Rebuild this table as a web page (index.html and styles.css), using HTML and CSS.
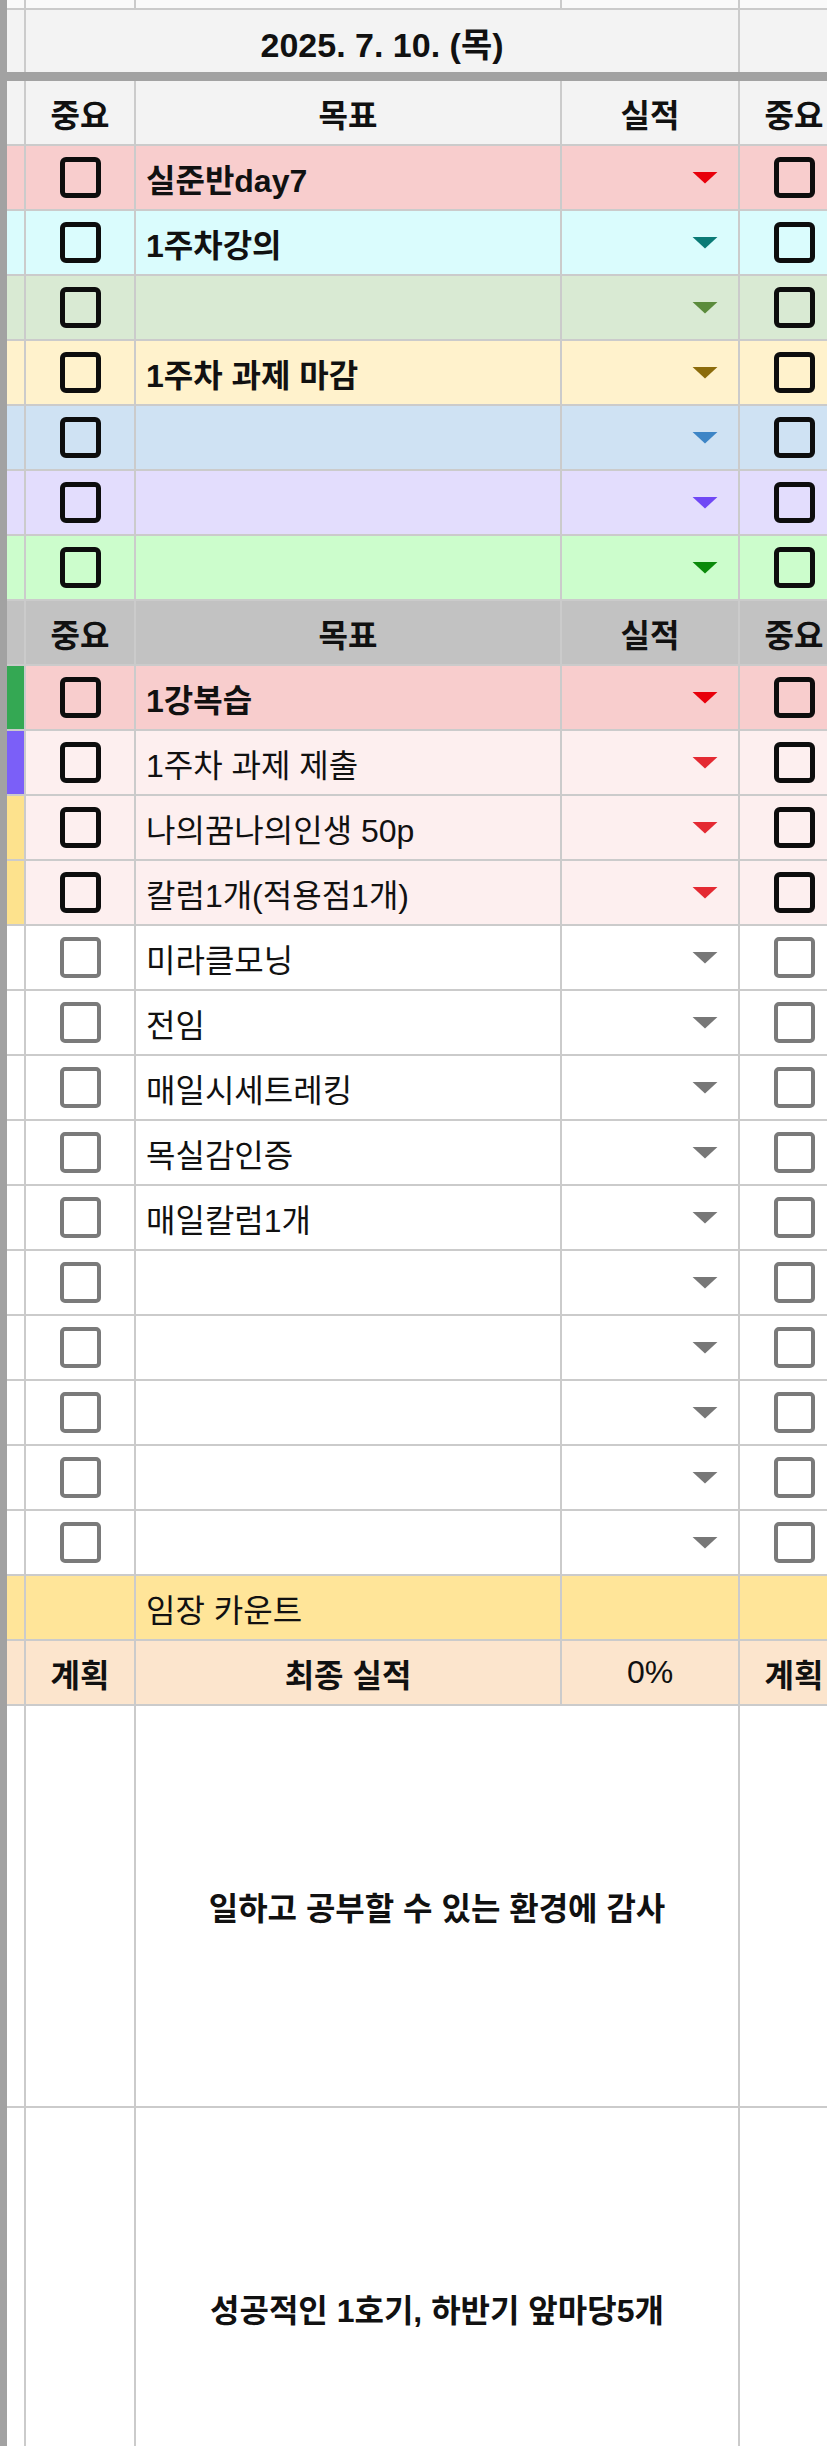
FILE: index.html
```html
<!DOCTYPE html>
<html lang="ko">
<head>
<meta charset="utf-8">
<title>Planner</title>
<link rel="stylesheet" href="styles.css">
</head>
<body>
<div class="sheet">
  <div class="row row-top">
    <div class="c"></div><div class="c"></div><div class="c"></div><div class="c"></div><div class="c"></div>
  </div>
  <div class="row row-date">
    <div class="c gray"></div>
    <div class="c gray span3 date">2025. 7. 10. (목)</div>
    <div class="c gray"></div>
  </div>
  <div class="freeze"></div>

  <div class="row head">
    <div class="c"></div>
    <div class="c center">중요</div>
    <div class="c center">목표</div>
    <div class="c center">실적</div>
    <div class="c center">중요</div>
  </div>

  <div class="row bg-red">
    <div class="c"></div>
    <div class="c center"><span class="cb"></span></div>
    <div class="c text bold">실준반day7</div>
    <div class="c dd-cell"><span class="dd t-red"></span></div>
    <div class="c center"><span class="cb"></span></div>
  </div>
  <div class="row bg-cyan">
    <div class="c"></div>
    <div class="c center"><span class="cb"></span></div>
    <div class="c text bold">1주차강의</div>
    <div class="c dd-cell"><span class="dd t-teal"></span></div>
    <div class="c center"><span class="cb"></span></div>
  </div>
  <div class="row bg-sage">
    <div class="c"></div>
    <div class="c center"><span class="cb"></span></div>
    <div class="c text bold"></div>
    <div class="c dd-cell"><span class="dd t-olive"></span></div>
    <div class="c center"><span class="cb"></span></div>
  </div>
  <div class="row bg-yellow">
    <div class="c"></div>
    <div class="c center"><span class="cb"></span></div>
    <div class="c text bold">1주차 과제 마감</div>
    <div class="c dd-cell"><span class="dd t-gold"></span></div>
    <div class="c center"><span class="cb"></span></div>
  </div>
  <div class="row bg-blue">
    <div class="c"></div>
    <div class="c center"><span class="cb"></span></div>
    <div class="c text bold"></div>
    <div class="c dd-cell"><span class="dd t-blue"></span></div>
    <div class="c center"><span class="cb"></span></div>
  </div>
  <div class="row bg-lavender">
    <div class="c"></div>
    <div class="c center"><span class="cb"></span></div>
    <div class="c text bold"></div>
    <div class="c dd-cell"><span class="dd t-violet"></span></div>
    <div class="c center"><span class="cb"></span></div>
  </div>
  <div class="row bg-mint">
    <div class="c"></div>
    <div class="c center"><span class="cb"></span></div>
    <div class="c text bold"></div>
    <div class="c dd-cell"><span class="dd t-green"></span></div>
    <div class="c center"><span class="cb"></span></div>
  </div>

  <div class="row head head2">
    <div class="c"></div>
    <div class="c center">중요</div>
    <div class="c center">목표</div>
    <div class="c center">실적</div>
    <div class="c center">중요</div>
  </div>

  <div class="row bg-red">
    <div class="c strip-green"></div>
    <div class="c center"><span class="cb"></span></div>
    <div class="c text bold">1강복습</div>
    <div class="c dd-cell"><span class="dd t-red"></span></div>
    <div class="c center"><span class="cb"></span></div>
  </div>
  <div class="row bg-pink">
    <div class="c strip-purple"></div>
    <div class="c center"><span class="cb"></span></div>
    <div class="c text">1주차 과제 제출</div>
    <div class="c dd-cell"><span class="dd t-red2"></span></div>
    <div class="c center"><span class="cb"></span></div>
  </div>
  <div class="row bg-pink">
    <div class="c strip-yellow"></div>
    <div class="c center"><span class="cb"></span></div>
    <div class="c text">나의꿈나의인생 50p</div>
    <div class="c dd-cell"><span class="dd t-red2"></span></div>
    <div class="c center"><span class="cb"></span></div>
  </div>
  <div class="row bg-pink">
    <div class="c strip-yellow"></div>
    <div class="c center"><span class="cb"></span></div>
    <div class="c text">칼럼1개(적용점1개)</div>
    <div class="c dd-cell"><span class="dd t-red2"></span></div>
    <div class="c center"><span class="cb"></span></div>
  </div>

  <div class="row bg-white">
    <div class="c"></div>
    <div class="c center"><span class="cb cb-gray"></span></div>
    <div class="c text">미라클모닝</div>
    <div class="c dd-cell"><span class="dd t-gray"></span></div>
    <div class="c center"><span class="cb cb-gray"></span></div>
  </div>
  <div class="row bg-white">
    <div class="c"></div>
    <div class="c center"><span class="cb cb-gray"></span></div>
    <div class="c text">전임</div>
    <div class="c dd-cell"><span class="dd t-gray"></span></div>
    <div class="c center"><span class="cb cb-gray"></span></div>
  </div>
  <div class="row bg-white">
    <div class="c"></div>
    <div class="c center"><span class="cb cb-gray"></span></div>
    <div class="c text">매일시세트레킹</div>
    <div class="c dd-cell"><span class="dd t-gray"></span></div>
    <div class="c center"><span class="cb cb-gray"></span></div>
  </div>
  <div class="row bg-white">
    <div class="c"></div>
    <div class="c center"><span class="cb cb-gray"></span></div>
    <div class="c text">목실감인증</div>
    <div class="c dd-cell"><span class="dd t-gray"></span></div>
    <div class="c center"><span class="cb cb-gray"></span></div>
  </div>
  <div class="row bg-white">
    <div class="c"></div>
    <div class="c center"><span class="cb cb-gray"></span></div>
    <div class="c text">매일칼럼1개</div>
    <div class="c dd-cell"><span class="dd t-gray"></span></div>
    <div class="c center"><span class="cb cb-gray"></span></div>
  </div>
  <div class="row bg-white">
    <div class="c"></div>
    <div class="c center"><span class="cb cb-gray"></span></div>
    <div class="c text"></div>
    <div class="c dd-cell"><span class="dd t-gray"></span></div>
    <div class="c center"><span class="cb cb-gray"></span></div>
  </div>
  <div class="row bg-white">
    <div class="c"></div>
    <div class="c center"><span class="cb cb-gray"></span></div>
    <div class="c text"></div>
    <div class="c dd-cell"><span class="dd t-gray"></span></div>
    <div class="c center"><span class="cb cb-gray"></span></div>
  </div>
  <div class="row bg-white">
    <div class="c"></div>
    <div class="c center"><span class="cb cb-gray"></span></div>
    <div class="c text"></div>
    <div class="c dd-cell"><span class="dd t-gray"></span></div>
    <div class="c center"><span class="cb cb-gray"></span></div>
  </div>
  <div class="row bg-white">
    <div class="c"></div>
    <div class="c center"><span class="cb cb-gray"></span></div>
    <div class="c text"></div>
    <div class="c dd-cell"><span class="dd t-gray"></span></div>
    <div class="c center"><span class="cb cb-gray"></span></div>
  </div>
  <div class="row bg-white">
    <div class="c"></div>
    <div class="c center"><span class="cb cb-gray"></span></div>
    <div class="c text"></div>
    <div class="c dd-cell"><span class="dd t-gray"></span></div>
    <div class="c center"><span class="cb cb-gray"></span></div>
  </div>

  <div class="row bg-count">
    <div class="c"></div>
    <div class="c"></div>
    <div class="c text">임장 카운트</div>
    <div class="c"></div>
    <div class="c"></div>
  </div>
  <div class="row bg-peach">
    <div class="c"></div>
    <div class="c center bold">계획</div>
    <div class="c center bold">최종 실적</div>
    <div class="c center pct">0%</div>
    <div class="c center bold">계획</div>
  </div>

  <div class="row big">
    <div class="c"></div>
    <div class="c"></div>
    <div class="c span2 center big-text">일하고 공부할 수 있는 환경에 감사</div>
    <div class="c"></div>
  </div>
  <div class="row big">
    <div class="c"></div>
    <div class="c"></div>
    <div class="c span2 center big-text">성공적인 1호기, 하반기 앞마당5개</div>
    <div class="c"></div>
  </div>
</div>
</body>
</html>
```

FILE: styles.css
```css
html, body {
  margin: 0;
  padding: 0;
  background: #ffffff;
}

body {
  width: 827px;
  height: 2446px;
  overflow: hidden;
  font-family: "Liberation Sans", "Noto Sans CJK KR", sans-serif;
  color: #111111;
}

.sheet {
  width: 820px;
  min-height: 2446px;
  border-left: 7px solid #a2a2a2;
  overflow: hidden;
}

.row {
  display: grid;
  grid-template-columns: 17px 108px 424px 176px 108px;
  column-gap: 2px;
  background: #cbcbcb;
  padding-bottom: 2px;
  height: 63px;
  width: 841px;
}

.c {
  min-width: 0;
  display: flex;
  align-items: center;
  font-size: 32px;
  white-space: nowrap;
  overflow: hidden;
}

.row > .c { background: var(--bg, #ffffff); }

.center { justify-content: center; }
.bold { font-weight: 700; }

.text {
  padding-left: 10px;
}

.row-top { height: 8px; --bg: #fafafa; }
.row-date { height: 62px; padding-bottom: 0; --bg: #f3f3f3; }
.span3 { grid-column: 2 / 5; }
.span2 { grid-column: 3 / 5; }

.date {
  justify-content: center;
  font-size: 34px;
  font-weight: 700;
  padding-top: 2px;
}

.freeze {
  height: 9px;
  background: #a2a2a2;
  width: 820px;
}

.head { --bg: #f3f3f3; }
.head .c { font-weight: 700; }
.head2 { --bg: #c2c2c2; }

.bg-red { --bg: #f8cdcd; }
.bg-cyan { --bg: #dafcfd; }
.bg-sage { --bg: #d9ead3; }
.bg-yellow { --bg: #fff2cc; }
.bg-blue { --bg: #cfe2f3; }
.bg-lavender { --bg: #e3ddfd; }
.bg-mint { --bg: #ccfdcc; }
.bg-pink { --bg: #fdefef; }
.bg-white { --bg: #ffffff; }
.bg-count { --bg: #ffe599; }
.bg-peach { --bg: #fce5cd; }

.row > .strip-green { background: #34a853; }
.row > .strip-purple { background: #7b5ff8; }
.row > .strip-yellow { background: #fde28d; }

.cb {
  display: block;
  width: 41px;
  height: 41px;
  box-sizing: border-box;
  border: 5px solid #0d0d0d;
  border-radius: 6px;
}

.cb-gray {
  border: 4px solid #7a7a7a;
  border-radius: 5px;
}

.dd-cell {
  justify-content: flex-end;
  padding-right: 20px;
}

.dd {
  display: block;
  width: 26px;
  height: 12px;
  clip-path: polygon(0 0, 100% 0, 50% 100%);
  background: currentColor;
}

.t-red { color: #e8000b; }
.t-red2 { color: #e42a32; }
.t-teal { color: #0b7a76; }
.t-olive { color: #5b8b3c; }
.t-gold { color: #8c6c0c; }
.t-blue { color: #3d85c6; }
.t-violet { color: #7048f5; }
.t-green { color: #0a8a0a; }
.t-gray { color: #777777; }

.pct { font-size: 32px; }

.big {
  height: 400px;
  --bg: #ffffff;
}

.big-text {
  font-size: 32px;
  font-weight: 700;
}
```
